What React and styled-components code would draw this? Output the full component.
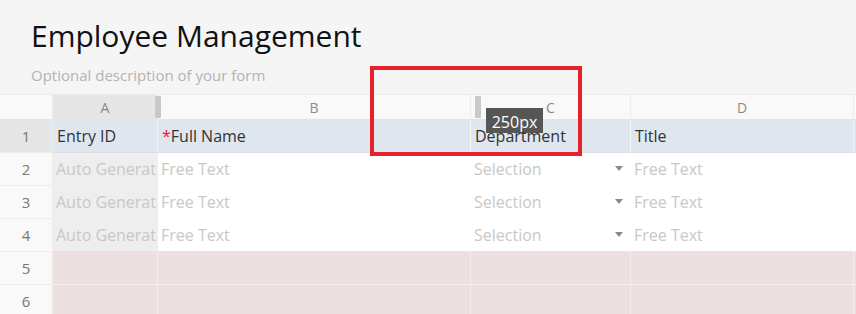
import React from "react";
import styled, { createGlobalStyle, css } from "styled-components";

const GlobalStyle = createGlobalStyle`
  html, body {
    margin: 0;
    padding: 0;
    background: #f5f5f5;
    font-family: "Open Sans", "Liberation Sans", sans-serif;
    overflow: hidden;
  }
`;

const Page = styled.div`
  position: relative;
  width: 856px;
  height: 314px;
  overflow: hidden;
  background: #f5f5f5;
`;

const FormHeader = styled.header`
  padding: 16px 31px 0;
  height: 94px;
  box-sizing: border-box;
`;

const Title = styled.h1`
  margin: 0;
  font-size: 30px;
  font-weight: 400;
  line-height: 40px;
  color: #111;
`;

const Description = styled.p`
  margin: 10px 0 0;
  font-size: 15px;
  line-height: 18px;
  color: #b3b3b3;
`;

const Sheet = styled.div`
  display: grid;
  grid-template-columns: 53px 105px 313px 160px 223px 1fr;
  grid-auto-rows: 33px;
  grid-template-rows: 25px;
  border-top: 1px solid #ececec;
`;

const ColHead = styled.div`
  position: relative;
  display: flex;
  align-items: center;
  justify-content: center;
  box-sizing: border-box;
  border-right: 1px solid #ececec;
  border-bottom: 1px solid #e4e4e4;
  font-size: 14px;
  color: #8a8a8a;
  background: ${(p) => (p.$active ? "#e6e6e6" : "#f9f9f9")};
`;

const Handle = styled.span`
  position: absolute;
  top: 1px;
  bottom: 1px;
  width: 6px;
  border-radius: 1px;
  background: #c9c9c9;
  ${(p) =>
    p.$side === "left"
      ? css`
          left: 4px;
        `
      : css`
          right: -4px;
          z-index: 2;
        `}
`;

const RowNum = styled.div`
  display: flex;
  align-items: center;
  justify-content: center;
  box-sizing: border-box;
  border-right: 1px solid #ececec;
  border-bottom: 1px solid #ececec;
  font-size: 15px;
  color: #777;
  background: ${(p) => (p.$active ? "#e6e6e6" : "#f9f9f9")};
`;

const cellBg = {
  label: "#dfe6ee",
  readonly: "#eeeeee",
  input: "#ffffff",
  empty: "#ede0e0",
};

const cellLine = {
  label: "#f1f3f6",
  readonly: "#eeeeee",
  input: "#ffffff",
  empty: "#f6eeee",
};

const Cell = styled.div`
  position: relative;
  display: flex;
  align-items: center;
  box-sizing: border-box;
  padding: 0 4px 1px 3px;
  overflow: hidden;
  white-space: nowrap;
  font-size: 16px;
  background: ${(p) => cellBg[p.$kind]};
  border-right: 1px solid ${(p) => cellLine[p.$kind]};
  border-bottom: 1px solid
    ${(p) => (p.$kind === "label" ? "#d9dee5" : p.$kind === "empty" ? "#f6eeee" : "transparent")};
  color: ${(p) => (p.$kind === "label" ? "#333" : "#c8c8c8")};
  ${(p) =>
    p.$lastInput &&
    css`
      border-bottom: 1px solid #ebe3e3;
    `}
`;

const LabelText = styled.span`
  position: relative;
  z-index: 4;
  padding-left: 1px;
`;

const Required = styled.span`
  color: #e8202a;
`;

const Caret = styled.span`
  position: absolute;
  right: 7px;
  top: 13px;
  width: 0;
  height: 0;
  border-left: 4px solid transparent;
  border-right: 4px solid transparent;
  border-top: 5px solid #8a8a8a;
`;

const Highlight = styled.div`
  position: absolute;
  left: 370px;
  top: 66px;
  width: 212px;
  height: 90px;
  box-sizing: border-box;
  border: 4px solid #e8202a;
  pointer-events: none;
  z-index: 5;
`;

const Tooltip = styled.div`
  position: absolute;
  left: 486px;
  top: 108px;
  width: 57px;
  height: 25px;
  box-sizing: border-box;
  padding-top: 3px;
  text-align: center;
  line-height: 22px;
  background: #565656;
  color: #fff;
  font-size: 16px;
  z-index: 3;
`;

const columns = ["A", "B", "C", "D", ""];

const labels = [
  { text: "Entry ID" },
  { text: "Full Name", required: true },
  { text: "Department" },
  { text: "Title" },
  { text: "" },
];

const inputs = [
  { text: "Auto Generat", kind: "readonly" },
  { text: "Free Text", kind: "input" },
  { text: "Selection", kind: "input", select: true },
  { text: "Free Text", kind: "input" },
  { text: "", kind: "input" },
];

export default function App() {
  return (
    <Page>
      <GlobalStyle />
      <FormHeader>
        <Title>Employee Management</Title>
        <Description>Optional description of your form</Description>
      </FormHeader>
      <Sheet>
        <ColHead />
        {columns.map((c, i) => (
          <ColHead key={c + i} $active={i === 0}>
            {c}
            {i === 0 && <Handle $side="right" />}
            {i === 2 && <Handle $side="left" />}
          </ColHead>
        ))}

        <RowNum $active>1</RowNum>
        {labels.map((l, i) => (
          <Cell key={"l" + i} $kind="label">
            <LabelText>
              {l.required && <Required>*</Required>}
              {l.text}
            </LabelText>
          </Cell>
        ))}

        {[2, 3, 4].map((n) => (
          <React.Fragment key={n}>
            <RowNum>{n}</RowNum>
            {inputs.map((c, i) => (
              <Cell key={i} $kind={c.kind} $lastInput={n === 4}>
                {c.text}
                {c.select && <Caret />}
              </Cell>
            ))}
          </React.Fragment>
        ))}

        {[5, 6].map((n) => (
          <React.Fragment key={n}>
            <RowNum>{n}</RowNum>
            {columns.map((c, i) => (
              <Cell key={i} $kind="empty" />
            ))}
          </React.Fragment>
        ))}
      </Sheet>
      <Tooltip>250px</Tooltip>
      <Highlight />
    </Page>
  );
}
